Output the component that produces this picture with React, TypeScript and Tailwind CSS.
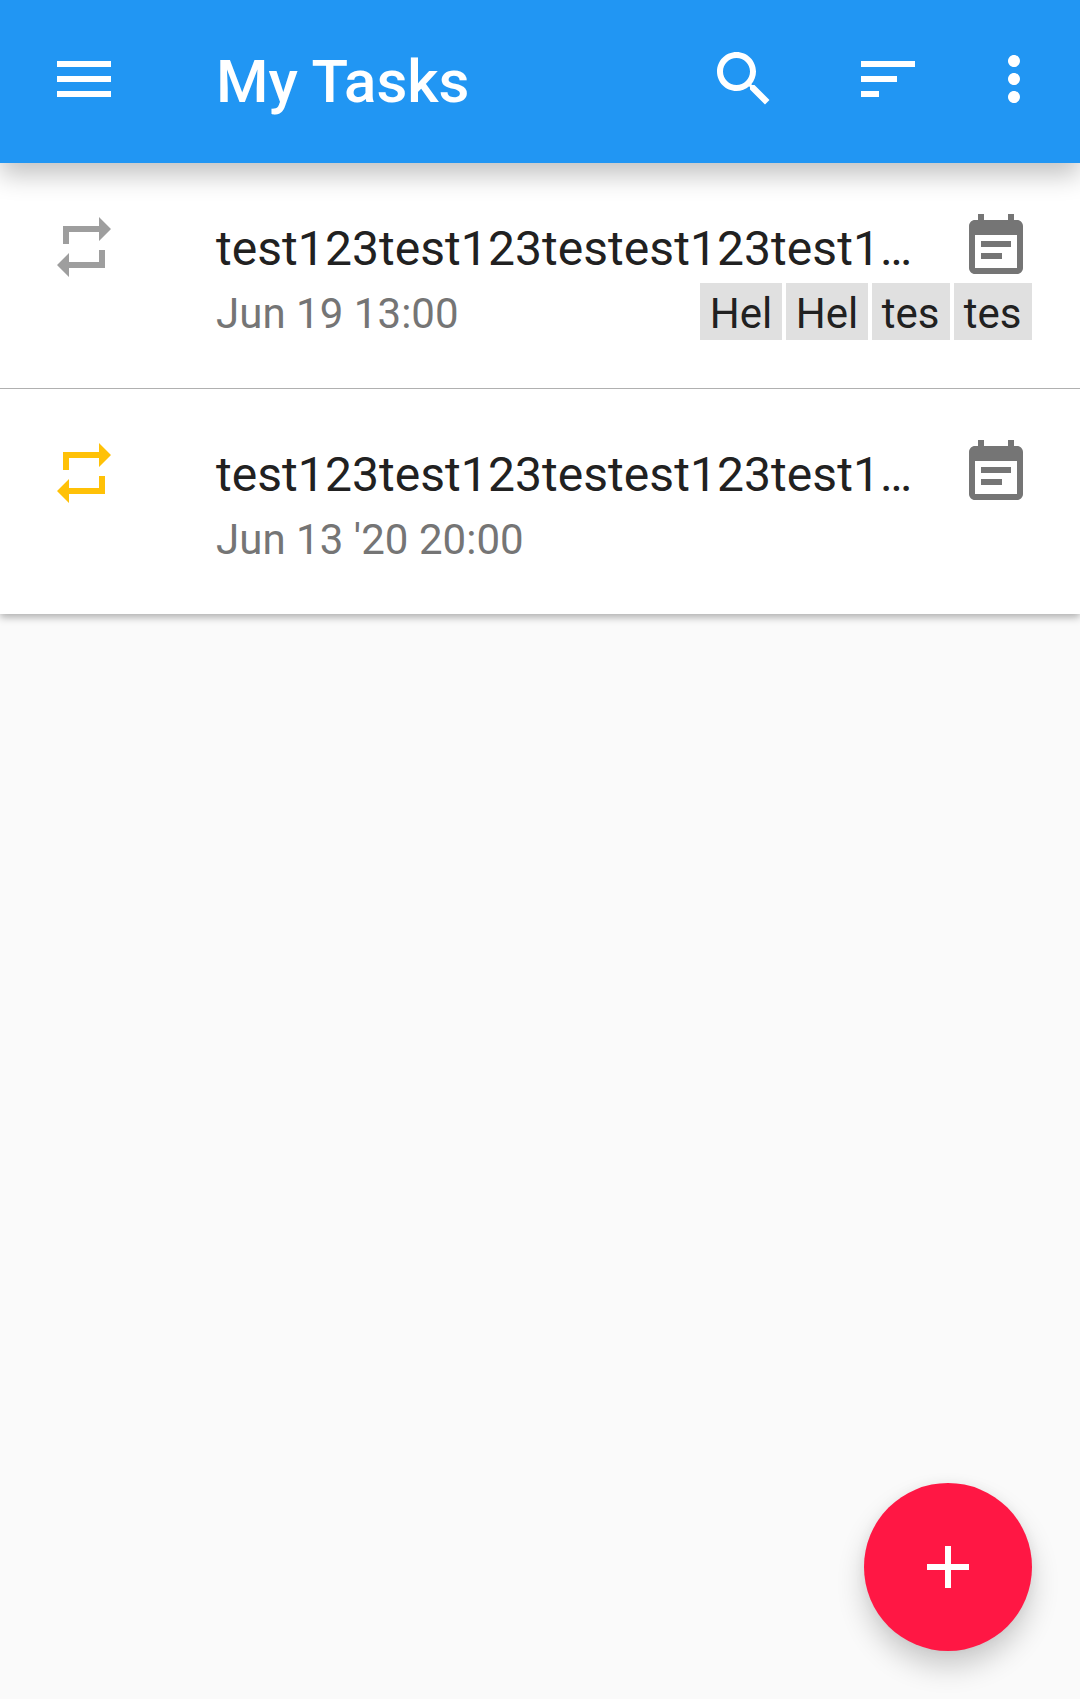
import type { ReactNode } from "react";

function Icon({ d, className = "" }: { d: string; className?: string }) {
  return (
    <svg viewBox="0 0 24 24" fill="currentColor" className={`size-[72px] shrink-0 ${className}`}>
      <path d={d} />
    </svg>
  );
}

const MENU = "M3 18h18v-2H3v2zm0-5h18v-2H3v2zm0-7v2h18V6H3z";
const SEARCH =
  "M15.5 14h-.79l-.28-.27C15.41 12.59 16 11.11 16 9.5 16 5.91 13.09 3 9.5 3S3 5.91 3 9.5 5.91 16 9.5 16c1.61 0 3.09-.59 4.23-1.57l.27.28v.79l5 4.99L20.49 19l-4.99-5zm-6 0C7.01 14 5 11.99 5 9.5S7.01 5 9.5 5 14 7.01 14 9.5 11.99 14 9.5 14z";
const SORT = "M3 18h6v-2H3v2zM3 6v2h18V6H3zm0 7h12v-2H3v2z";
const MORE =
  "M12 8c1.1 0 2-.9 2-2s-.9-2-2-2-2 .9-2 2 .9 2 2 2zm0 2c-1.1 0-2 .9-2 2s.9 2 2 2 2-.9 2-2-.9-2-2-2zm0 6c-1.1 0-2 .9-2 2s.9 2 2 2 2-.9 2-2-.9-2-2-2z";
const REPEAT = "M7 7h10v3l4-4-4-4v3H5v6h2V7zm10 10H7v-3l-4 4 4 4v-3h12v-6h-2v4z";
const NOTE =
  "M17 10H7v2h10v-2zm2-7h-1V1h-2v2H8V1H6v2H5c-1.11 0-1.99.9-1.99 2L3 19c0 1.1.89 2 2 2h14c1.1 0 2-.9 2-2V5c0-1.1-.9-2-2-2zm0 16H5V8h14v11zm-5-5H7v2h7v-2z";
const ADD = "M19 13h-6v6h-2v-6H5v-2h6V5h2v6h6v2z";

function Tag({ children, wide }: { children: ReactNode; wide?: boolean }) {
  return (
    <span
      className={`flex h-[57px] items-center justify-center bg-[#e0e0e0] pt-1 text-[42px] leading-[53px] text-[#212121] ${wide ? "w-[82px]" : "w-[78px] pr-px"}`}
    >
      {children}
    </span>
  );
}

interface Task {
  title: string;
  date: string;
  tags: string[];
  iconColor: string;
}

const tasks: Task[] = [
  {
    title: "test123test123testest123test1…",
    date: "Jun 19 13:00",
    tags: ["Hel", "Hel", "tes", "tes"],
    iconColor: "text-[#9e9e9e]",
  },
  {
    title: "test123test123testest123test1…",
    date: "Jun 13 '20 20:00",
    tags: [],
    iconColor: "text-[#ffc107]",
  },
];

function TaskRow({ task }: { task: Task }) {
  return (
    <li className="box-content flex h-[177px] items-start pt-12 pr-12 pl-12">
      <Icon d={REPEAT} className={task.iconColor} />
      <div className="ml-24 flex min-w-0 flex-1 flex-col">
        <div className="flex h-[72px] items-center justify-between">
          <p className="pt-1 text-[48px] leading-[56px] tracking-[0.06px] whitespace-nowrap text-[#212121]">
            {task.title}
          </p>
          <Icon d={NOTE} />
        </div>
        <div className="flex h-[57px] items-center justify-between">
          <p className="pt-1 text-[42px] leading-[53px] tracking-[0.04px] text-[#757575]">{task.date}</p>
          <div className="flex gap-1">
            {task.tags.map((tag, i) => (
              <Tag key={i} wide={tag === "Hel"}>
                {tag}
              </Tag>
            ))}
          </div>
        </div>
      </div>
    </li>
  );
}

export default function App() {
  return (
    <div className="relative h-[1699px] w-[1080px] overflow-hidden bg-[#fafafa] font-[Roboto,sans-serif]">
      <header className="relative z-10 flex h-[163px] items-start bg-[#2196f3] px-12 pt-[43px] text-white shadow-[0_12px_24px_rgba(0,0,0,0.24)]">
        <Icon d={MENU} />
        <h1 className="ml-24 flex-1 text-[60px] leading-[78px] font-medium">My Tasks</h1>
        <Icon d={SEARCH} />
        <Icon d={SORT} className="ml-[72px]" />
        <Icon d={MORE} className="-mr-[18px] ml-[54px]" />
      </header>

      <ul className="divide-y divide-[#b0b0b0] bg-white text-[#757575] shadow-[0_3px_8px_rgba(0,0,0,0.32)]">
        {tasks.map((task, i) => (
          <TaskRow key={i} task={task} />
        ))}
      </ul>

      <button
        aria-label="Add task"
        className="absolute right-12 bottom-12 flex size-[168px] items-center justify-center rounded-full bg-[#ff1744] text-white shadow-[0_16px_28px_rgba(0,0,0,0.19),0_0_12px_rgba(0,0,0,0.05)]"
      >
        <Icon d={ADD} />
      </button>
    </div>
  );
}
